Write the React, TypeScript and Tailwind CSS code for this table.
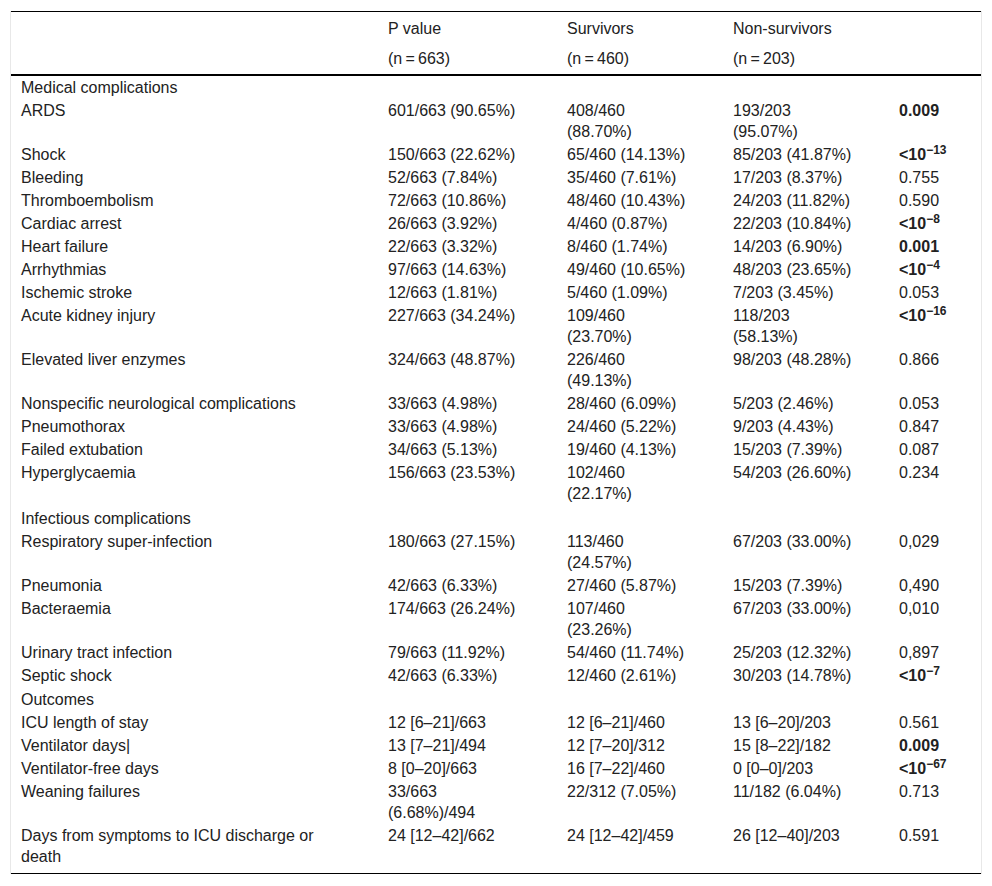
import React from 'react';

type Row = {
  label: string;
  all?: string;
  surv?: string;
  non?: string;
  p?: React.ReactNode;
  section?: boolean;
};

const B = ({ children }: { children: React.ReactNode }) => <b className="font-bold">{children}</b>;
const Exp = ({ e }: { e: string }) => (
  <b className="font-bold">
    &lt;10<sup>{e}</sup>
  </b>
);

const rows: Row[] = [
  { label: 'Medical complications', section: true },
  { label: 'ARDS', all: '601/663 (90.65%)', surv: '408/460 (88.70%)', non: '193/203 (95.07%)', p: <B>0.009</B> },
  { label: 'Shock', all: '150/663 (22.62%)', surv: '65/460 (14.13%)', non: '85/203 (41.87%)', p: <Exp e="−13" /> },
  { label: 'Bleeding', all: '52/663 (7.84%)', surv: '35/460 (7.61%)', non: '17/203 (8.37%)', p: '0.755' },
  { label: 'Thromboembolism', all: '72/663 (10.86%)', surv: '48/460 (10.43%)', non: '24/203 (11.82%)', p: '0.590' },
  { label: 'Cardiac arrest', all: '26/663 (3.92%)', surv: '4/460 (0.87%)', non: '22/203 (10.84%)', p: <Exp e="−8" /> },
  { label: 'Heart failure', all: '22/663 (3.32%)', surv: '8/460 (1.74%)', non: '14/203 (6.90%)', p: <B>0.001</B> },
  { label: 'Arrhythmias', all: '97/663 (14.63%)', surv: '49/460 (10.65%)', non: '48/203 (23.65%)', p: <Exp e="−4" /> },
  { label: 'Ischemic stroke', all: '12/663 (1.81%)', surv: '5/460 (1.09%)', non: '7/203 (3.45%)', p: '0.053' },
  { label: 'Acute kidney injury', all: '227/663 (34.24%)', surv: '109/460 (23.70%)', non: '118/203 (58.13%)', p: <Exp e="−16" /> },
  { label: 'Elevated liver enzymes', all: '324/663 (48.87%)', surv: '226/460 (49.13%)', non: '98/203 (48.28%)', p: '0.866' },
  { label: 'Nonspecific neurological complications', all: '33/663 (4.98%)', surv: '28/460 (6.09%)', non: '5/203 (2.46%)', p: '0.053' },
  { label: 'Pneumothorax', all: '33/663 (4.98%)', surv: '24/460 (5.22%)', non: '9/203 (4.43%)', p: '0.847' },
  { label: 'Failed extubation', all: '34/663 (5.13%)', surv: '19/460 (4.13%)', non: '15/203 (7.39%)', p: '0.087' },
  { label: 'Hyperglycaemia', all: '156/663 (23.53%)', surv: '102/460 (22.17%)', non: '54/203 (26.60%)', p: '0.234' },
  { label: 'Infectious complications', section: true },
  { label: 'Respiratory super-infection', all: '180/663 (27.15%)', surv: '113/460 (24.57%)', non: '67/203 (33.00%)', p: '0,029' },
  { label: 'Pneumonia', all: '42/663 (6.33%)', surv: '27/460 (5.87%)', non: '15/203 (7.39%)', p: '0,490' },
  { label: 'Bacteraemia', all: '174/663 (26.24%)', surv: '107/460 (23.26%)', non: '67/203 (33.00%)', p: '0,010' },
  { label: 'Urinary tract infection', all: '79/663 (11.92%)', surv: '54/460 (11.74%)', non: '25/203 (12.32%)', p: '0,897' },
  { label: 'Septic shock', all: '42/663 (6.33%)', surv: '12/460 (2.61%)', non: '30/203 (14.78%)', p: <Exp e="−7" /> },
  { label: 'Outcomes', section: true },
  { label: 'ICU length of stay', all: '12 [6–21]/663', surv: '12 [6–21]/460', non: '13 [6–20]/203', p: '0.561' },
  { label: 'Ventilator days|', all: '13 [7–21]/494', surv: '12 [7–20]/312', non: '15 [8–22]/182', p: <B>0.009</B> },
  { label: 'Ventilator-free days', all: '8 [0–20]/663', surv: '16 [7–22]/460', non: '0 [0–0]/203', p: <Exp e="−67" /> },
  { label: 'Weaning failures', all: '33/663 (6.68%)/494', surv: '22/312 (7.05%)', non: '11/182 (6.04%)', p: '0.713' },
  { label: 'Days from symptoms to ICU discharge or death', all: '24 [12–42]/662', surv: '24 [12–42]/459', non: '26 [12–40]/203', p: '0.591' },
];

const thin = '\u2009';

export default function App() {
  return (
    <div
      className="bg-white px-[10px] pt-[11px] text-[16px] text-[#222]"
      style={{ fontFamily: '"Liberation Sans", Arial, sans-serif' }}
    >
      <div className="border-x border-[#e8e8e8]">
        <table className="w-full table-fixed border-collapse border-t border-b border-black">
          <colgroup>
            <col className="w-[367px]" />
            <col className="w-[179px]" />
            <col className="w-[166px]" />
            <col className="w-[166px]" />
            <col className="w-[92px]" />
          </colgroup>
          <thead>
            <tr className="leading-[21px]">
              <th className="py-[5px] pl-[10px] font-normal"></th>
              <th className="pt-[6px] pb-[4px] pl-[10px] text-left font-normal">P value</th>
              <th className="pt-[6px] pb-[4px] pl-[10px] text-left font-normal">Survivors</th>
              <th className="pt-[6px] pb-[4px] pl-[10px] text-left font-normal">Non-survivors</th>
              <th className="py-[5px] pl-[10px] font-normal"></th>
            </tr>
            <tr className="border-b-2 border-black leading-[21px]">
              <th className="py-[5px] pl-[10px] font-normal"></th>
              <th className="py-[5px] pl-[10px] text-left font-normal">{`(n${thin}=${thin}663)`}</th>
              <th className="py-[5px] pl-[10px] text-left font-normal">{`(n${thin}=${thin}460)`}</th>
              <th className="py-[5px] pl-[10px] text-left font-normal">{`(n${thin}=${thin}203)`}</th>
              <th className="py-[5px] pl-[10px] font-normal"></th>
            </tr>
          </thead>
          <tbody>
            {rows.map((r, i) => {
              const last = i === rows.length - 1;
              const pad = last ? 'pt-px pb-[6px]' : r.section && i > 0 ? 'pt-[2.5px] pb-px' : 'py-px';
              return (
                <tr key={i} className="align-top leading-[21px]">
                  <td className={`${pad} pl-[10px] pr-[38px]`}>{r.label}</td>
                  <td className={`${pad} pl-[10px] pr-[35px]`}>{r.all}</td>
                  <td className={`${pad} pl-[10px] pr-[33px]`}>{r.surv}</td>
                  <td className={`${pad} pl-[10px] pr-[33px]`}>{r.non}</td>
                  <td className={`${pad} pl-[10px]`}>{r.p}</td>
                </tr>
              );
            })}
          </tbody>
        </table>
      </div>
    </div>
  );
}
